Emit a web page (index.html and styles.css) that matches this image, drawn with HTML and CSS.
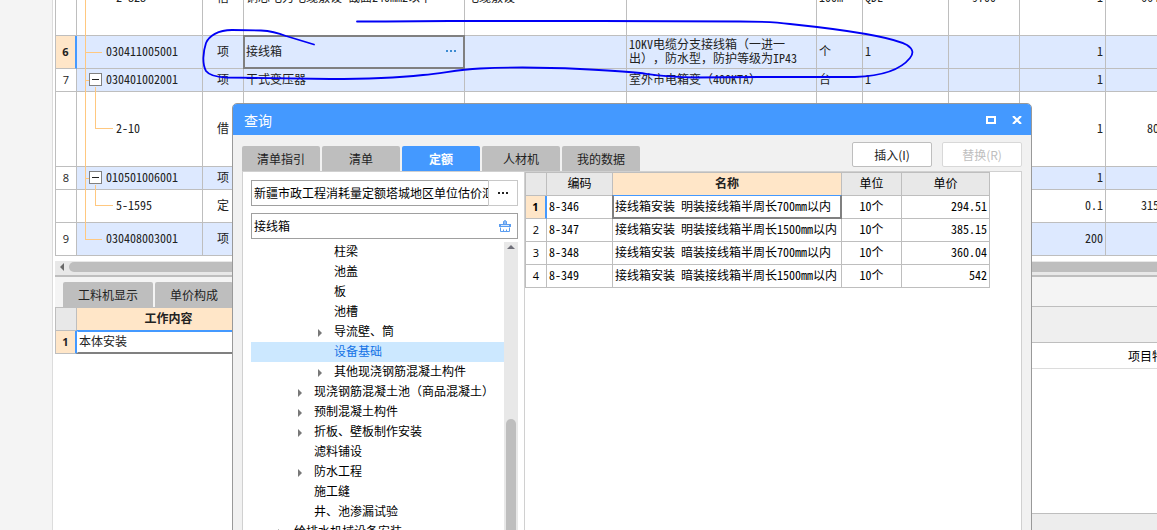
FILE: index.html
```html
<!DOCTYPE html>
<html lang="zh-CN">
<head>
<meta charset="utf-8">
<title>查询</title>
<link rel="stylesheet" href="styles.css">
</head>
<body>
<div class="app">
  <aside class="rail"></aside>
  <main class="workspace">
    <div class="sheet-view">
      <table class="grid sheet">
        <colgroup><col class="w-num"><col class="w-code"><col class="w-kind"><col class="w-name"><col class="w-work"><col class="w-feature"><col class="w-unit"><col class="w-expr"><col class="w-ratio"><col class="w-qty"><col class="w-price"></colgroup>
        <tbody>
          <tr class="r-high"><th></th><td class="code child trunk">2-828</td><td class="center">借</td><td>铜芯电力电缆敷设 截面240mm2以下</td><td>电缆敷设</td><td></td><td>100m</td><td>QDL</td><td class="center">9700</td><td class="right">1</td><td class="right">664</td></tr>
          <tr class="r-tall item"><th class="active">6</th><td class="code trunk branch">030411005001</td><td class="center">项</td><td class="cursor"><div class="editing"><span>接线箱</span><button class="more" aria-label="更多"><svg width="11" height="2" viewBox="0 0 11 2"><path d="M0 0h2v2H0zM4 0h2v2H4zM8 0h2v2H8z" fill="#3c8cd2"/></svg></button></div></td><td></td><td class="feature">10KV电缆分支接线箱（一进一出），防水型，防护等级为IP43</td><td>个</td><td>1</td><td></td><td class="right">1</td><td></td></tr>
          <tr class="r-low item"><th>7</th><td class="code trunk stem"><button class="fold" aria-label="折叠"></button>030401002001</td><td class="center">项</td><td>干式变压器</td><td></td><td>室外市电箱变（400KTA）</td><td>台</td><td>1</td><td></td><td class="right">1</td><td></td></tr>
          <tr class="r-high"><th></th><td class="code child trunk leaf">2-10</td><td class="center">借</td><td></td><td></td><td></td><td></td><td></td><td></td><td class="right">1</td><td class="right">80</td></tr>
          <tr class="r-low item"><th>8</th><td class="code trunk stem"><button class="fold" aria-label="折叠"></button>010501006001</td><td class="center">项</td><td></td><td></td><td></td><td></td><td></td><td></td><td class="right">1</td><td></td></tr>
          <tr class="r-tall"><th></th><td class="code child trunk leaf">5-1595</td><td class="center">定</td><td></td><td></td><td></td><td></td><td></td><td></td><td class="right">0.1</td><td class="right">315</td></tr>
          <tr class="r-tall item"><th>9</th><td class="code trunk branch last">030408003001</td><td class="center">项</td><td></td><td></td><td></td><td></td><td></td><td></td><td class="right">200</td><td></td></tr>
        </tbody>
      </table>
    </div>
    <div class="hscroll">
      <svg class="arrow-left" viewBox="0 0 4 8"><path d="M4 0v8L0 4z" fill="#6a6a6a"/></svg>
      <div class="hthumb"></div>
    </div>
    <div class="lower">
      <section class="lower-left">
        <nav class="tabs lower-tabs">
          <button class="tab wide">工料机显示</button><button class="tab">单价构成</button>
        </nav>
        <table class="grid content">
          <colgroup><col class="w-num"><col class="c-text"></colgroup>
          <thead><tr><th></th><th class="picked">工作内容</th></tr></thead>
          <tbody><tr><th class="active">1</th><td class="cursor">本体安装</td></tr></tbody>
        </table>
      </section>
      <section class="lower-right">
        <div class="strip"></div>
        <div class="toolbar"></div>
        <div class="heading">项目特征</div>
        <div class="blank"></div>
        <div class="footer"></div>
      </section>
    </div>
  </main>

  <svg class="ink" viewBox="0 0 720 90" width="720" height="90" aria-hidden="true">
    <path d="M114 44.500C106 42 96 39 86 36C76 32 71 31 61 30.500L32 30C18 30 9 36 6 43C3 52 2 64 6 71C9 75 17 77 26 77.500L130 79C165 79 195 78 223 75C245 73 255 70 280 68.500C310 67 350 67.500 380 69C400 70 420 71 440 73C455 75 465 77 495 77.500L560 77L655 77C685 76 702 68 710 58C714 53 713 49 707 45C692 37 650 31 617 27L590 24C575 22 560 21.500 540 21.500L400 21H250L186 21.500L157 21.500" fill="none" stroke="#0000f5" stroke-width="1.800" stroke-linecap="round" stroke-linejoin="round"/>
  </svg>

  <section class="dialog" role="dialog" aria-labelledby="dialog-title">
    <header class="titlebar">
      <h1 id="dialog-title">查询</h1>
      <button class="win" aria-label="最大化"><svg width="10" height="8" viewBox="0 0 10 8"><path d="M1 1h8v6H1z" fill="none" stroke="#fff" stroke-width="2"/></svg></button>
      <button class="win" aria-label="关闭"><svg width="10" height="8" viewBox="0 0 10 8"><path d="M1 0l8 8M9 0L1 8" fill="none" stroke="#fff" stroke-width="2.200"/></svg></button>
    </header>
    <div class="dialog-bar">
      <nav class="tabs">
        <button class="tab">清单指引</button><button class="tab">清单</button><button class="tab current">定额</button><button class="tab">人材机</button><button class="tab">我的数据</button>
      </nav>
      <div class="actions"><button class="action">插入(I)</button><button class="action" disabled>替换(R)</button></div>
    </div>
    <div class="dialog-body">
      <div class="finder">
        <div class="picker"><input class="field" aria-label="定额库" value="新疆市政工程消耗量定额塔城地区单位估价汇总表"><button class="browse" aria-label="选择"><svg width="10" height="2" viewBox="0 0 10 2"><path d="M0 0h2v2H0zM4 0h2v2H4zM8 0h2v2H8z" fill="#222"/></svg></button></div>
        <div class="search"><input class="field" aria-label="搜索" value="接线箱"><button class="clear" aria-label="清除"><svg width="12" height="12" viewBox="0 0 12 12"><path d="M4.500 4V1.500Q6 -.5 7.500 1.500V4" fill="#8fbcf6" stroke="#5b9df0"/><path d="M0 4h12v3H0z" fill="#5b9df0"/><path d="M2 5.500h8" stroke="#d6e7fd"/><path d="M1.500 7.500v4h9v-4M4.500 11.500V9.500M7.500 11.500V9.500" fill="none" stroke="#5b9df0"/></svg></button></div>
        <div class="tree-view">
          <ul class="tree">
            <li class="d3">柱梁</li>
            <li class="d3">池盖</li>
            <li class="d3">板</li>
            <li class="d3">池槽</li>
            <li class="d3 parent">导流壁、筒</li>
            <li class="d3 selected">设备基础</li>
            <li class="d3 parent">其他现浇钢筋混凝土构件</li>
            <li class="d2 parent">现浇钢筋混凝土池（商品混凝土）</li>
            <li class="d2 parent">预制混凝土构件</li>
            <li class="d2 parent">折板、壁板制作安装</li>
            <li class="d2">滤料铺设</li>
            <li class="d2 parent">防水工程</li>
            <li class="d2">施工缝</li>
            <li class="d2">井、池渗漏试验</li>
            <li class="d1 parent">给排水机械设备安装</li>
          </ul>
          <div class="vscroll"><svg width="8" height="4" viewBox="0 0 8 4"><path d="M0 4h8L4 0z" fill="#70707a"/></svg><div class="vthumb"></div></div>
        </div>
      </div>
      <div class="results">
        <table class="grid quota">
          <colgroup><col class="w-num"><col class="q-code"><col class="q-name"><col class="q-unit"><col class="q-price"></colgroup>
          <thead><tr><th></th><th>编码</th><th class="picked">名称</th><th>单位</th><th>单价</th></tr></thead>
          <tbody>
            <tr><th class="active">1</th><td>8-346</td><td class="cursor">接线箱安装 明装接线箱半周长700mm以内</td><td class="center">10个</td><td class="right">294.51</td></tr>
            <tr><th>2</th><td>8-347</td><td>接线箱安装 明装接线箱半周长1500mm以内</td><td class="center">10个</td><td class="right">385.15</td></tr>
            <tr><th>3</th><td>8-348</td><td>接线箱安装 暗装接线箱半周长700mm以内</td><td class="center">10个</td><td class="right">360.04</td></tr>
            <tr><th>4</th><td>8-349</td><td>接线箱安装 暗装接线箱半周长1500mm以内</td><td class="center">10个</td><td class="right">542</td></tr>
          </tbody>
        </table>
      </div>
    </div>
  </section>
</div>
</body>
</html>
```
FILE: styles.css
```css
* { box-sizing: border-box; }
body {
  margin: 0;
  font: 12px/14px "Noto Sans Mono CJK SC", "Noto Sans CJK SC", sans-serif;
  text-spacing-trim: space-all;
  color: #222;
}
button, input { font: inherit; color: inherit; margin: 0; padding: 0; border: 0; background: none; }
.app { position: relative; display: flex; height: 100vh; overflow: hidden; background: #fff; }
.rail { flex: 0 0 53px; background: #f4f4f4; border-right: 1px solid #dcdcdc; }
.workspace { flex: 1; min-width: 0; display: flex; flex-direction: column; padding-left: 2px; }
.sheet-view { flex: none; overflow: hidden; padding-bottom: 5px; }

/* Shared grid look */
.grid { border-collapse: separate; border-spacing: 0; table-layout: fixed; }
.grid th, .grid td {
  position: relative;
  padding: 0 2px 2px;
  border-right: 1px solid #bebebe;
  border-bottom: 1px solid #bebebe;
  text-align: left;
  font-weight: normal;
  white-space: nowrap;
}
.grid td { overflow: hidden; }
.grid th { text-align: center; }
.grid tr > :first-child { padding-bottom: 0; border-left: 1px solid #bebebe; font-family: "Open Sans", sans-serif; font-size: 11px; }
.grid .right { text-align: right; }
.grid .center { text-align: center; }
.grid .active { background: #ffe6c8; font-weight: bold; border-right: 2px solid #4499ff; }
.grid .cursor { overflow: visible; }
.grid .cursor::after { content: ""; position: absolute; inset: -1px; border: 2px solid #808080; pointer-events: none; }
.grid thead th { height: 24px; background: #e8e8e8; border-top: 1px solid #bebebe; color: #000; }
.grid thead .picked { background: #ffe6c8; color: #222; font-weight: bold; border-bottom-color: #4499ff; }
.w-num { width: 22px; }

/* Bill of quantities */
.sheet { width: 1107px; margin-top: -39px; }
.w-code { width: 126px; } .w-kind { width: 41px; } .w-name { width: 221px; } .w-work { width: 162px; }
.w-feature { width: 190px; } .w-unit { width: 46px; } .w-expr { width: 86px; } .w-ratio { width: 71px; }
.w-qty { width: 86px; } .w-price { width: 56px; }
.r-tall { height: 33px; } .r-low { height: 23px; } .r-high { height: 75px; }
.item td { background: #dde9ff; }
.grid .feature { white-space: normal; }
.grid .code { padding-left: 29px; overflow: visible; }
.grid .child { padding-left: 39px; }
.trunk::before { content: ""; position: absolute; left: 8px; top: 0; bottom: -1px; border-left: 1px solid #ffc880; z-index: 1; }
.last::before { bottom: 50%; }
.branch::after, .stem::after { content: ""; position: absolute; left: 8px; top: 50%; width: 17px; border-top: 1px solid #ffc880; }
.stem::after { width: 4px; }
.leaf::after { content: ""; position: absolute; left: 18px; top: -5px; bottom: 50%; width: 17px; border: solid #ffc880; border-width: 0 0 1px 1px; }
.fold { position: absolute; left: 12px; top: 4px; width: 13px; height: 13px; border: 1px solid #808080; background: #fff; z-index: 2; }
.fold::after { content: ""; display: block; margin: 0 2px; border-top: 1px solid #222; }
.editing { display: flex; justify-content: space-between; }
.more { display: flex; align-items: center; padding-right: 5px; }

/* Horizontal scroll bar */
.hscroll { flex: none; display: flex; align-items: center; height: 16px; padding: 0 0 2px 5px; background: #e8e8e8; border-bottom: 2px solid #bebebe; }
.arrow-left { width: 4px; height: 8px; }
.hthumb { flex: 1; height: 10px; margin-left: 5px; border-radius: 5px 0 0 5px; background: #bebebe; }

/* Tabs */
.tabs { display: flex; gap: 2px; }
.tab { width: 78px; height: 25px; background: #bebebe; border-radius: 2px 2px 0 0; }
.tab.wide { width: 90px; }
.tab.current { background: #4499ff; color: #fff; font-weight: bold; }

/* Lower panes */
.lower { flex: 1; display: flex; min-height: 0; }
.lower-left { flex: 0 0 420px; }
.lower-tabs { padding: 5px 0 0 8px; background: #f4f4f4; }
.content { width: 206px; }
.c-text { width: 184px; }
.content tbody tr { height: 23px; }
.grid.content .cursor::after { border-color: #4499ff #808080 #808080 transparent; }
.lower-right { flex: 1; display: flex; flex-direction: column; }
.strip { height: 30px; background: #f4f4f4; border-bottom: 1px solid #bebebe; }
.toolbar { height: 36px; background: #efefef; border-bottom: 1px solid #bebebe; }
.heading { height: 26px; line-height: 26px; overflow: hidden; white-space: nowrap; margin-right: -20px; padding-right: 1px; text-align: right; border-bottom: 1px solid #dcdcdc; color: #000; }
.blank { flex: 1; }
.footer { height: 17px; background: #ededed; border-top: 1px solid #bebebe; }

/* Hand-drawn mark over the sheet */
.ink { position: absolute; left: 200px; top: 0; pointer-events: none; z-index: 3; }

/* Dialog window */
.dialog { position: absolute; left: 232px; right: 125px; top: 103px; bottom: -20px; z-index: 4; display: flex; flex-direction: column; overflow: hidden; border: 1px solid #999; border-radius: 5px 5px 0 0; background: #f1f1f1; }
.titlebar { flex: none; display: flex; align-items: center; height: 31px; padding: 0 4px 0 11px; background: #4499ff; color: #fff; }
.titlebar h1 { flex: 1; margin: 0; font-size: 14px; line-height: 20px; font-weight: normal; }
.win { display: flex; align-items: center; justify-content: center; width: 20px; height: 20px; margin-left: 6px; }
.dialog-bar { flex: none; display: flex; justify-content: space-between; align-items: flex-end; height: 36px; padding: 0 9px; }
.actions { display: flex; gap: 10px; padding-bottom: 4px; }
.action { width: 80px; height: 25px; border: 1px solid #bebebe; border-radius: 2px; background: #fff; font-family: "Noto Sans CJK SC", sans-serif; }
.action:disabled { border-color: #d8d8d8; color: #bebebe; }
.dialog-body { flex: 1; min-height: 0; display: flex; margin: 0 9px; border: 1px solid #d0d0d0; border-bottom: 0; background: #fff; color: #000; }
.finder { flex: 0 0 282px; display: flex; flex-direction: column; padding: 8px 6px 0 8px; border-right: 1px solid #d0d0d0; }
.picker, .search { flex: none; display: flex; height: 26px; border: 1px solid #a0a0a0; }
.picker { margin-bottom: 7px; }
.field { flex: 1; min-width: 0; padding-left: 2px; outline: 0; }
.browse { display: flex; align-items: center; justify-content: center; width: 30px; margin: -1px; border: 1px solid #c8c8c8; background: #fff; }
.clear { display: flex; align-items: center; justify-content: center; width: 24px; }
.tree-view { flex: 1; min-height: 0; display: flex; margin-top: 3px; }
.tree { flex: 1; margin: 0; padding: 0; list-style: none; overflow: hidden; }
.tree li { height: 20px; line-height: 18px; white-space: nowrap; }
.d1 { padding-left: 43px; } .d2 { padding-left: 63px; } .d3 { padding-left: 83px; }
.parent::before { content: ""; display: inline-block; margin: 0 12px 0 -16px; border: solid transparent; border-width: 4px 0 4px 4px; border-left-color: #787878; vertical-align: -1px; }
.tree .selected { background: #cce8ff; color: #1473e6; }
.vscroll { display: flex; flex-direction: column; align-items: center; flex: 0 0 14px; padding-top: 3px; background: #e8e8e8; }
.vthumb { flex: 1; width: 10px; margin-top: 170px; border-radius: 5px 5px 0 0; background: #bebebe; }
.results { flex: 1; min-width: 0; overflow: hidden; }
.quota { width: 465px; }
.quota tbody tr { height: 23px; }
.grid.quota .cursor::after { border-top: 1px solid #4499ff; }
.q-code { width: 66px; } .q-name { width: 229px; } .q-unit { width: 60px; } .q-price { width: 88px; }
```
